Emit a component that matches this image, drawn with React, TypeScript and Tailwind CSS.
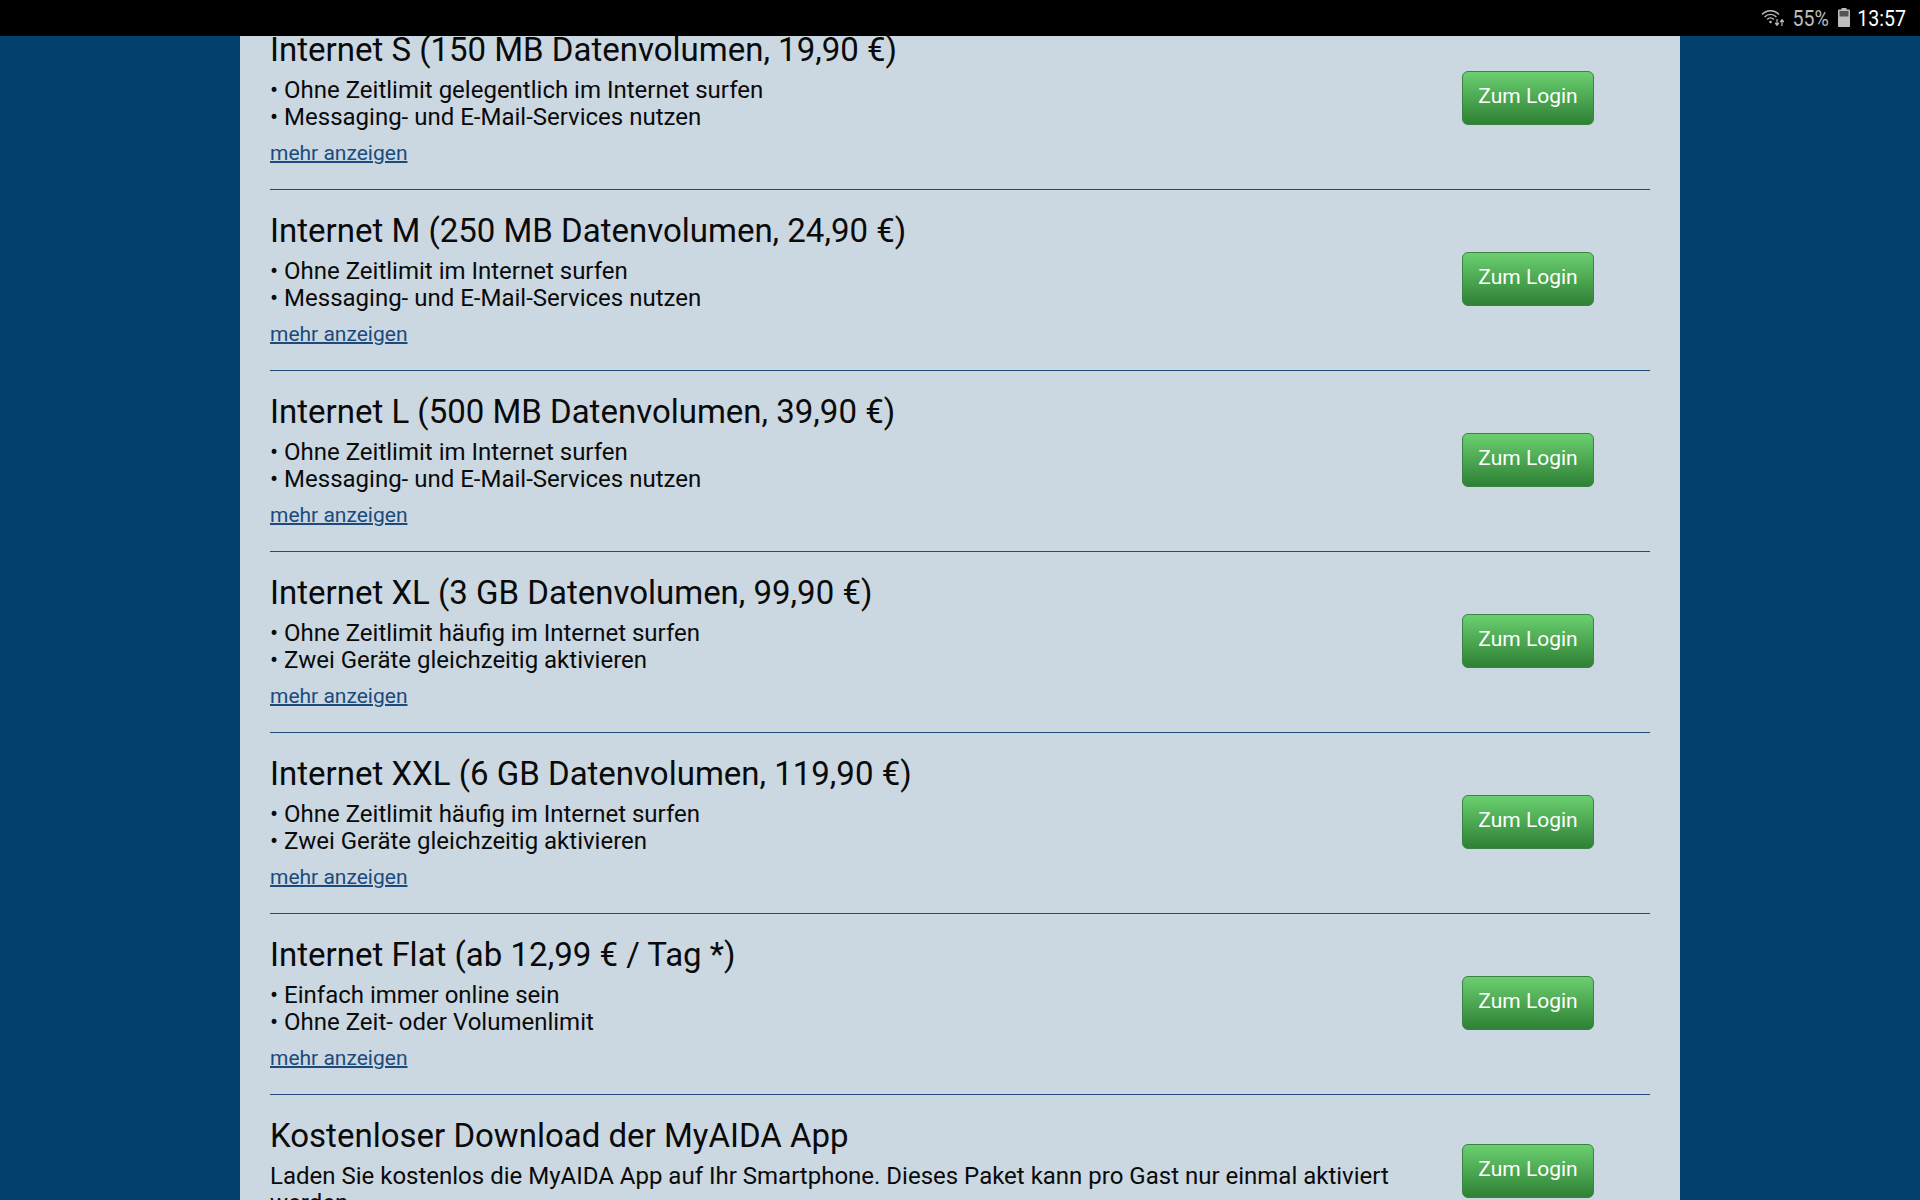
const items = [
  { t: "Internet S (150 MB Datenvolumen, 19,90 €)", a: "Ohne Zeitlimit gelegentlich im Internet surfen", b: "Messaging- und E-Mail-Services nutzen" },
  { t: "Internet M (250 MB Datenvolumen, 24,90 €)", a: "Ohne Zeitlimit im Internet surfen", b: "Messaging- und E-Mail-Services nutzen" },
  { t: "Internet L (500 MB Datenvolumen, 39,90 €)", a: "Ohne Zeitlimit im Internet surfen", b: "Messaging- und E-Mail-Services nutzen" },
  { t: "Internet XL (3 GB Datenvolumen, 99,90 €)", a: "Ohne Zeitlimit häufig im Internet surfen", b: "Zwei Geräte gleichzeitig aktivieren" },
  { t: "Internet XXL (6 GB Datenvolumen, 119,90 €)", a: "Ohne Zeitlimit häufig im Internet surfen", b: "Zwei Geräte gleichzeitig aktivieren" },
  { t: "Internet Flat (ab 12,99 € / Tag *)", a: "Einfach immer online sein", b: "Ohne Zeit- oder Volumenlimit" },
];

function LoginButton() {
  return (
    <button className="w-[132px] h-[54px] rounded-[6px] border border-[#3a8340] bg-gradient-to-b from-[#6bd070] to-[#2e8135] text-white text-[21px] leading-[48px] pb-[6px] text-center">
      Zum Login
    </button>
  );
}

function Wifi() {
  return (
    <svg width="24" height="20" viewBox="0 0 24 20" fill="none" stroke="#bdbdbd" strokeWidth="1.4" className="mr-[2px]">
      <path d="M1 6.5C5.5 1.5 13.5 1.5 18 6.5" />
      <path d="M3.6 9C7 5.5 12 5.5 15.4 9" />
      <path d="M6.2 11.5C8.2 9.5 10.8 9.5 12.8 11.5" />
      <circle cx="9.5" cy="14" r="1.3" fill="#bdbdbd" stroke="none" />
      <path d="M16 11v6M14.2 15l1.8 2.2 1.8-2.2" strokeWidth="1.2" />
      <path d="M21 18v-6M19.2 14l1.8-2.2 1.8 2.2" strokeWidth="1.2" />
    </svg>
  );
}

export default function App() {
  return (
    <div className="w-[1920px] h-[1200px] overflow-hidden bg-[#03406d] font-['Roboto',sans-serif] flex flex-col">
      <div className="h-[36px] shrink-0 bg-black flex items-center justify-end pr-[14px] relative z-10">
        <Wifi />
        <span className="text-[#bdbdbd] text-[22.5px] leading-none scale-x-[0.87] origin-right">55%</span>
        <svg width="12" height="19" viewBox="0 0 12 19" className="ml-[9px] mb-[1px]">
          <rect x="3.5" y="0" width="5" height="2" fill="#bdbdbd" />
          <rect x="0" y="1.5" width="12" height="17.5" rx="1" fill="#bdbdbd" />
          <rect x="1.5" y="3" width="9" height="5.5" fill="#555" />
        </svg>
        <span className="text-white text-[22.5px] leading-none scale-x-[0.87] origin-right">13:57</span>
      </div>
      <div className="flex-1 min-h-0 overflow-hidden">
        <div className="w-[1440px] mx-auto h-full overflow-hidden bg-[#cbd8e2] px-[30px] text-[#0a0a0a]">
          <div className="-mt-[27px]">
            {items.map((it) => (
              <div key={it.t} className="h-[181px] border-b border-[#1f4a7a] flex items-start justify-between pr-[56px] pt-[21px] box-border">
                <div>
                  <div className="text-[33px] leading-[40px] mb-[7px]">{it.t}</div>
                  <div className="text-[24px] leading-[27px]">• {it.a}</div>
                  <div className="text-[24px] leading-[27px]">• {it.b}</div>
                  <a className="block mt-[9px] text-[21px] leading-[26px] text-[#1c4a7c] underline decoration-[2px]">mehr anzeigen</a>
                </div>
                <div className="mt-[41px]"><LoginButton /></div>
              </div>
            ))}
            <div className="flex items-start justify-between pr-[56px] pt-[21px]">
              <div className="w-[1130px]">
                <div className="text-[33px] leading-[40px] mb-[7px]">Kostenloser Download der MyAIDA App</div>
                <div className="text-[24px] leading-[27px]">Laden Sie kostenlos die MyAIDA App auf Ihr Smartphone. Dieses Paket kann pro Gast nur einmal aktiviert werden.</div>
              </div>
              <div className="mt-[28px]"><LoginButton /></div>
            </div>
          </div>
        </div>
      </div>
    </div>
  );
}
